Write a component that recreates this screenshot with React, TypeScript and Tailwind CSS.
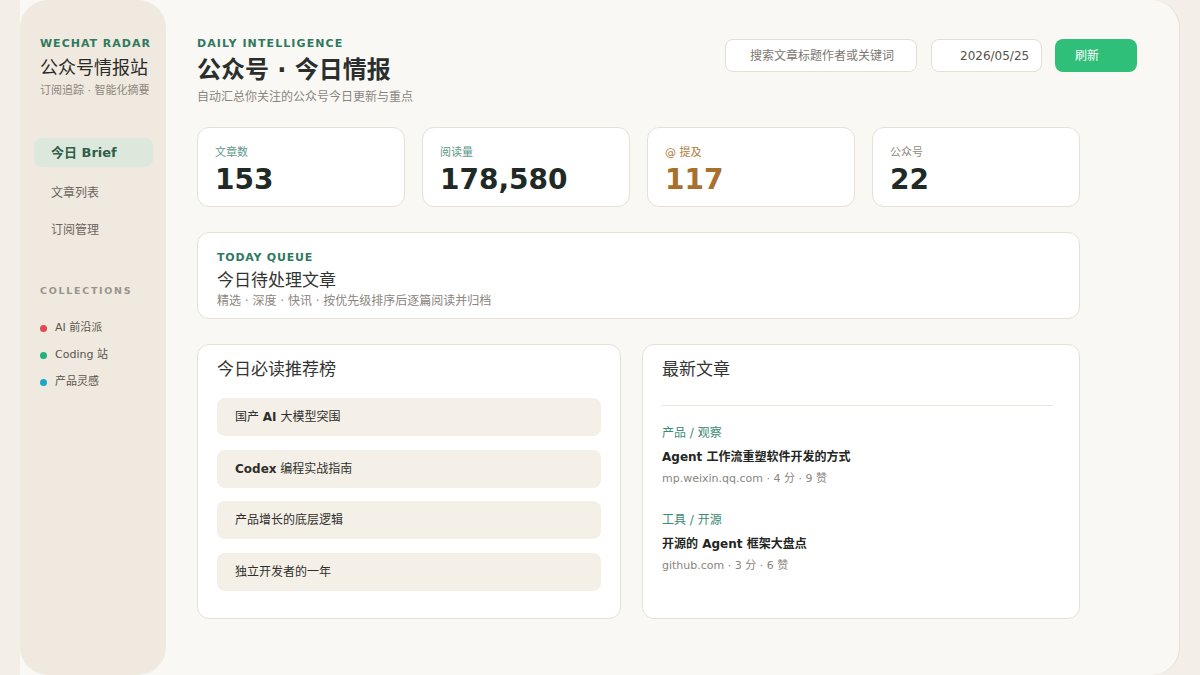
import React from 'react';

const stats = [
  { label: '文章数', value: '153', labelCls: 'text-[#5f9a8b]', valueCls: 'text-[#1f2a27]' },
  { label: '阅读量', value: '178,580', labelCls: 'text-[#5f9a8b]', valueCls: 'text-[#1f2a27]' },
  { label: '@ 提及', value: '117', labelCls: 'text-[#b07b3c]', valueCls: 'text-[#a8702c]' },
  { label: '公众号', value: '22', labelCls: 'text-[#8e8a84]', valueCls: 'text-[#1f2a27]' },
];

const collections = [
  { name: 'AI 前沿派', dot: 'bg-[#e5484d]' },
  { name: 'Coding 站', dot: 'bg-[#22b07d]' },
  { name: '产品灵感', dot: 'bg-[#1aa7cb]' },
];

const mustRead = [
  <>国产 <b>AI</b> 大模型突围</>,
  <><b>Codex</b> 编程实战指南</>,
  <>产品增长的底层逻辑</>,
  <>独立开发者的一年</>,
];

const latest = [
  { tag: '产品 / 观察', title: <><b>Agent</b> 工作流重塑软件开发的方式</>, meta: 'mp.weixin.qq.com · 4 分 · 9 赞' },
  { tag: '工具 / 开源', title: <>开源的 <b>Agent</b> 框架大盘点</>, meta: 'github.com · 3 分 · 6 赞' },
];

const Sidebar = () => (
  <aside className="w-[146px] h-[675px] shrink-0 rounded-[28px] bg-[#efe9df] pl-5 pr-[8px] pt-[37px]">
    <div className="whitespace-nowrap text-[11px] leading-[14px] font-bold tracking-[0.09em] text-[#2f7a5f]">WECHAT RADAR</div>
    <div className="mt-[5px] text-[18px] leading-[24px] text-[#2b2b29]">公众号情报站</div>
    <div className="mt-[4px] text-[11px] leading-[14px] text-[#8d8780]">订阅追踪 · 智能化摘要</div>

    <nav className="mt-[40px] -ml-[6px] mr-[5px] flex flex-col">
      <div className="h-[29px] rounded-lg bg-[#dde8dd] pl-[17px] flex items-center text-[13px] font-bold text-[#2f5e48]">
        今日 Brief
      </div>
      <div className="mt-[11px] h-[29px] pl-[17px] flex items-center text-[12px] text-[#6b655e]">文章列表</div>
      <div className="mt-[8px] h-[29px] pl-[17px] flex items-center text-[12px] text-[#6b655e]">订阅管理</div>
    </nav>

    <div className="mt-[40px] text-[9.5px] leading-[14px] font-bold tracking-[0.18em] text-[#9a948c]">COLLECTIONS</div>
    <ul className="mt-[23px] flex flex-col gap-[13px]">
      {collections.map(c => (
        <li key={c.name} className="flex items-center gap-[8px] h-[14px] text-[11px] text-[#5a554e]">
          <span className={`w-[7px] h-[7px] rounded-full ${c.dot}`} />
          {c.name}
        </li>
      ))}
    </ul>
  </aside>
);

const App: React.FC = () => {
  return (
    <div className="w-[1200px] h-[675px] overflow-hidden bg-[#f3efe8] pr-[21px] font-['DejaVu_Sans','Noto_Sans_CJK_SC',sans-serif]">
      <div className="flex h-[675px] rounded-r-[28px] shadow-[1px_0_0_#e6dfd4] bg-[linear-gradient(90deg,#f3efe8_20px,#faf8f4_20px)] pl-5">
        <Sidebar />

        <main className="flex-1 pl-[31px] pt-[37px]">
          {/* Header */}
          <header className="w-[940px] flex items-start justify-between">
            <div>
              <div className="text-[11px] leading-[14px] font-bold tracking-[0.1em] text-[#2f7a5f]">DAILY INTELLIGENCE</div>
              <h1 className="mt-[3px] text-[24px] leading-[32px] font-semibold text-[#2a2f2e]">公众号 · 今日情报</h1>
              <p className="mt-[3px] text-[12px] leading-[16px] text-[#8b857e]">自动汇总你关注的公众号今日更新与重点</p>
            </div>
            <div className="flex items-center mt-[2px]">
              <div className="w-[192px] h-[33px] rounded-lg border border-[#e4ded3] bg-white pl-[24px] flex items-center text-[12px] text-[#7c7770]">
                搜索文章标题作者或关键词
              </div>
              <div className="ml-[14px] w-[111px] h-[33px] rounded-lg border border-[#e4ded3] bg-white pl-[28px] flex items-center text-[12px] text-[#555049]">
                2026/05/25
              </div>
              <button className="ml-[13px] w-[82px] h-[33px] rounded-lg bg-[#2fbf78] pl-5 text-left text-[12px] text-white">
                刷新
              </button>
            </div>
          </header>

          {/* Stats */}
          <section className="mt-[22px] w-[883px] grid grid-cols-4 gap-[17px]">
            {stats.map(s => (
              <div key={s.label} className="h-[80px] rounded-xl border border-[#e6e0d6] bg-white pl-[17px] pt-[18px]">
                <div className={`text-[11px] leading-[14px] ${s.labelCls}`}>{s.label}</div>
                <div className={`mt-[5px] text-[28px] leading-[30px] font-bold ${s.valueCls}`}>{s.value}</div>
              </div>
            ))}
          </section>

          {/* Today queue */}
          <section className="mt-[25px] w-[883px] h-[87px] rounded-xl border border-[#e6e0d6] bg-white pl-[19px] pt-[18px]">
            <div className="text-[11px] leading-[14px] font-bold tracking-[0.07em] text-[#2f7a5f]">TODAY QUEUE</div>
            <div className="mt-[4px] text-[17px] leading-[22px] text-[#333532]">今日待处理文章</div>
            <div className="mt-[2px] text-[12px] leading-[16px] text-[#8b857e]">精选 · 深度 · 快讯 · 按优先级排序后逐篇阅读并归档</div>
          </section>

          {/* Bottom panels */}
          <section className="mt-[25px] w-[883px] grid grid-cols-[424px_438px] gap-[21px]">
            <div className="h-[275px] rounded-xl border border-[#e6e0d6] bg-white px-[19px] pt-[12px]">
              <h2 className="text-[17px] leading-[24px] text-[#333532]">今日必读推荐榜</h2>
              <ul className="mt-[17px] flex flex-col gap-[13.5px]">
                {mustRead.map((m, i) => (
                  <li key={i} className="h-[38px] rounded-lg bg-[#f4efe7] pl-[18px] flex items-center text-[12px] text-[#2f2f2c]">
                    <span className="[&_b]:font-bold">{m}</span>
                  </li>
                ))}
              </ul>
            </div>

            <div className="h-[275px] rounded-xl border border-[#e6e0d6] bg-white pl-[19px] pt-[12px]">
              <h2 className="text-[17px] leading-[24px] text-[#333532]">最新文章</h2>
              <div className="mt-[24px] w-[391px] h-px bg-[#e9e4db]" />
              <ul className="mt-[19px] flex flex-col gap-[26px]">
                {latest.map(a => (
                  <li key={a.meta}>
                    <div className="text-[12px] leading-[16px] text-[#3d8a78]">{a.tag}</div>
                    <div className="mt-[8px] text-[12px] leading-[16px] font-bold text-[#232522]">{a.title}</div>
                    <div className="mt-[7px] text-[11px] leading-[14px] text-[#8a857e]">{a.meta}</div>
                  </li>
                ))}
              </ul>
            </div>
          </section>
        </main>
      </div>
    </div>
  );
};

export default App;
